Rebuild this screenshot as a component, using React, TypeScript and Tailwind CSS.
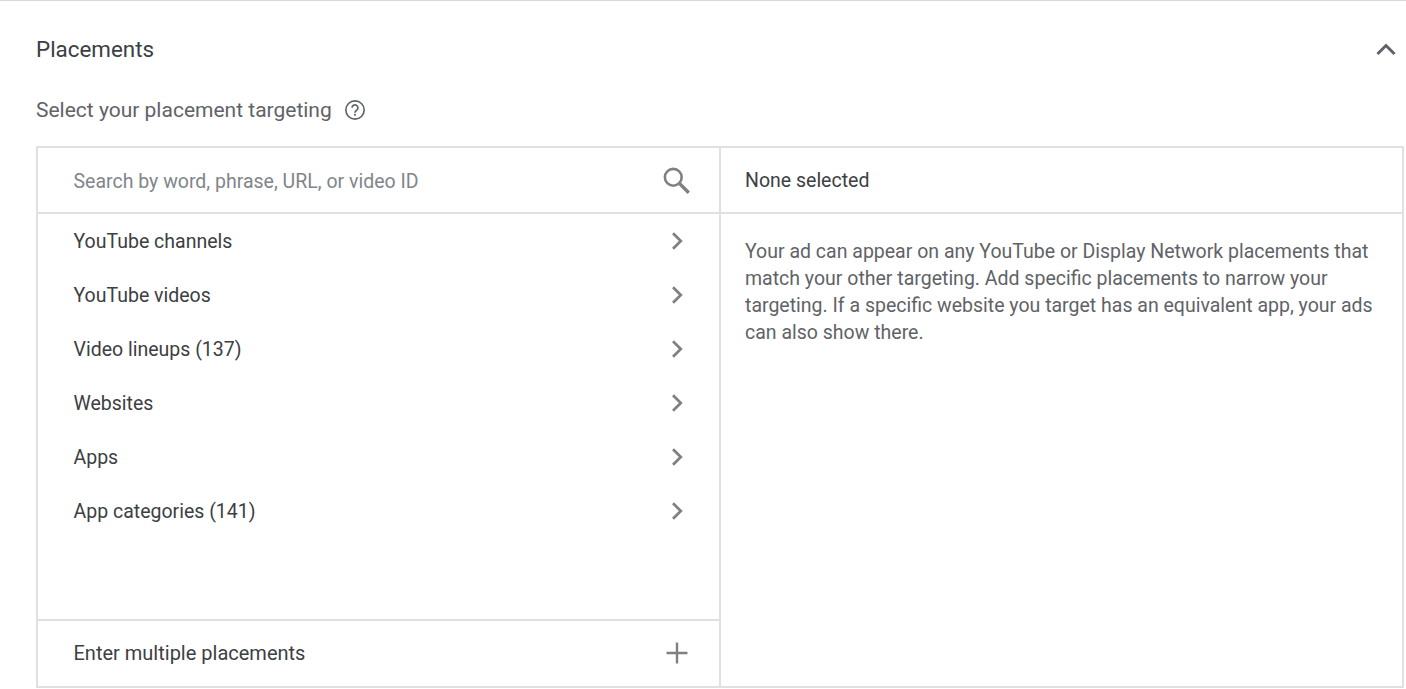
import React from "react";

const rows = [
  "YouTube channels",
  "YouTube videos",
  "Video lineups (137)",
  "Websites",
  "Apps",
  "App categories (141)",
];

function Chevron() {
  return (
    <svg width="24" height="24" viewBox="0 0 24 24" fill="none" className="shrink-0">
      <path d="M8 3.2 L15.8 11 L8 18.8" stroke="#808080" strokeWidth="2.7" />
    </svg>
  );
}

export default function App() {
  return (
    <div className="w-[1406px] h-[689px] overflow-hidden bg-white border-t border-[#d9d9d9] pl-9 pr-0.5 font-['Roboto',sans-serif]">
      <div className="flex items-center justify-between h-[96px] pb-[1px]">
        <h2 className="text-[22.4px] leading-[28px] font-normal text-[#3c4043] pt-[1px]">Placements</h2>
        <svg width="24" height="24" viewBox="0 0 24 24" fill="none" className="mr-[6px]">
          <path d="M3.5 17 L12 8.5 L20.5 17" stroke="#5f6368" strokeWidth="3" />
        </svg>
      </div>
      <div className="flex items-center gap-[12px] h-[28px] mb-[22px] -mt-[1px]">
        <span className="text-[21px] leading-[28px] text-[#5f6368]">Select your placement targeting</span>
        <svg width="22" height="22" viewBox="0 0 24 24" fill="none">
          <circle cx="12" cy="12" r="10" stroke="#5f6368" strokeWidth="1.8" />
          <path d="M8.8 9.6 a3.2 3.2 0 1 1 5 2.6 c-1.2 .9 -1.8 1.3 -1.8 2.8" stroke="#5f6368" strokeWidth="1.8" />
          <rect x="11" y="16.2" width="2" height="2" fill="#5f6368" />
        </svg>
      </div>
      <div className="flex h-[542px] border-2 border-[#e0e0e0]">
        <div className="w-[683px] shrink-0 flex flex-col border-r-2 border-[#e0e0e0]">
          <div className="flex items-center justify-between h-[66px] border-b-2 border-[#e0e0e0] pl-[35.5px] pr-[27px] shrink-0">
            <span className="text-[19.5px] text-[#80868b] leading-[28px] pt-[4px]">Search by word, phrase, URL, or video ID</span>
            <svg width="31" height="31" viewBox="0 0 24 24" fill="none">
              <circle cx="9.5" cy="9.5" r="6.5" stroke="#808080" strokeWidth="2" />
              <path d="M14.5 14.5 L21.5 21.5" stroke="#808080" strokeWidth="2.6" />
            </svg>
          </div>
          <div className="flex-1 flex flex-col pl-[35.5px] pr-[30px] pt-[1px]">
            {rows.map((r) => (
              <div key={r} className="flex items-center justify-between h-[54px] shrink-0">
                <span className="text-[19.5px] leading-[28px] text-[#3c4043]">{r}</span>
                <Chevron />
              </div>
            ))}
          </div>
          <div className="flex items-center justify-between h-[67px] border-t-2 border-[#e0e0e0] pl-[35.5px] pr-[27px] pb-[2px] shrink-0">
            <span className="text-[20px] leading-[28px] text-[#3c4043]">Enter multiple placements</span>
            <svg width="30" height="30" viewBox="0 0 30 30" fill="none">
              <path d="M15 4.5 V25.5 M4.5 15 H25.5" stroke="#808080" strokeWidth="2.4" />
            </svg>
          </div>
        </div>
        <div className="flex-1 flex flex-col">
          <div className="flex items-center h-[66px] border-b-2 border-[#e0e0e0] px-[24px] shrink-0">
            <span className="text-[19.5px] leading-[28px] text-[#3c4043] pt-[2px]">None selected</span>
          </div>
          <p className="px-[24px] pt-[24px] text-[19.5px] leading-[27px] text-[#5f6368]">
            Your ad can appear on any YouTube or Display Network placements that match your other targeting. Add specific placements to narrow your targeting. If a specific website you target has an equivalent app, your ads can also show there.
          </p>
        </div>
      </div>
    </div>
  );
}
